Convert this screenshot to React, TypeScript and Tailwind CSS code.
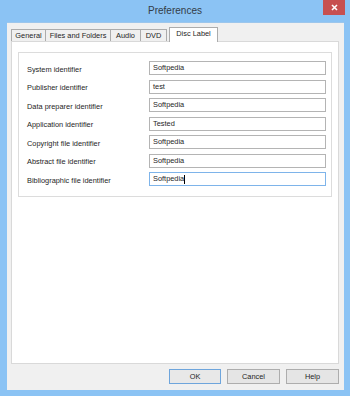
import React from 'react'

const fields = [
	{ label: 'System identifier', value: 'Softpedia' },
	{ label: 'Publisher identifier', value: 'test' },
	{ label: 'Data preparer identifier', value: 'Softpedia' },
	{ label: 'Application identifier', value: 'Tested' },
	{ label: 'Copyright file identifier', value: 'Softpedia' },
	{ label: 'Abstract file identifier', value: 'Softpedia' },
	{ label: 'Bibliographic file identifier', value: 'Softpedia', focused: true },
]

const tabs = [
	{ name: 'General', w: 'w-[35px]' },
	{ name: 'Files and Folders', w: 'w-[66px]' },
	{ name: 'Audio', w: 'w-[31px]' },
	{ name: 'DVD', w: 'w-[27px]' },
]

const App = () => {
	return (
		<div className="w-[350px] h-[396px] bg-[#8bc3f4] flex flex-col text-[#1e1e1e] font-['Liberation_Sans',Arial,sans-serif] overflow-hidden">
			{/* title bar */}
			<div className="relative h-[22px] shrink-0 flex items-center justify-center">
				<span className="text-[10px] text-[#333c47] leading-none">Preferences</span>
				<div className="absolute right-[5px] top-0 w-[22px] h-[15px] bg-[#c75050] flex items-center justify-center">
					<svg width="7" height="7" viewBox="0 0 7 7">
						<path d="M1 1L6 6M6 1L1 6" stroke="#fff" strokeWidth="1.6" />
					</svg>
				</div>
			</div>

			{/* client area */}
			<div className="flex-1 ml-[7px] mr-[6px] mb-[6px] bg-[#f0f0f0] border-t border-[#9cc6ec] flex flex-col pt-[4px] pl-[4px] pr-[5px] pb-[6px]">
				{/* tabs */}
				<div className="h-[14px] flex items-end shrink-0">
					{tabs.map((t, i) => (
						<div
							key={t.name}
							className={`${t.w} h-[12px] ${i > 0 ? '-ml-px' : ''} border border-b-0 border-[#acacac] bg-[#f0f0f0] flex items-center justify-center text-[7.4px] leading-none whitespace-nowrap`}
						>
							{t.name}
						</div>
					))}
					<div className="relative z-10 ml-[2px] w-[49px] h-[15px] -mb-px border border-b-0 border-[#acacac] bg-white flex items-center justify-center text-[7.4px] leading-none whitespace-nowrap pb-[2px]">
						Disc Label
					</div>
				</div>

				{/* panel */}
				<div className="flex-1 border border-[#d9d9d9] bg-white pt-[10px] px-[6px]">
					<div className="border border-[#dcdcdc] h-[145px] pl-[8px] pr-[5px] pt-[8px] flex flex-col gap-[4.5px]">
						{fields.map((f) => (
							<div key={f.label} className="flex items-center h-[14px]">
								<div className="w-[122px] text-[7.4px] leading-none pt-[3px] whitespace-nowrap">{f.label}</div>
								<div
									className={`flex-1 h-[14px] border ${f.focused ? 'border-[#7eb4ea]' : 'border-[#b4b4b4]'} bg-white flex items-center pl-[3px] text-[7.4px] leading-none`}
								>
									<span>{f.value}</span>
									{f.focused && <span className="w-px h-[9px] bg-black" />}
								</div>
							</div>
						))}
					</div>
				</div>

				{/* buttons */}
				<div className="mt-[5px] h-[15px] flex justify-end gap-[6px] shrink-0">
					<div className="w-[52px] h-[15px] border border-[#6ea5dc] bg-[#e8e8e8] flex items-center justify-center text-[7.4px] leading-none">OK</div>
					<div className="w-[53px] h-[15px] border border-[#adadad] bg-[#e5e5e5] flex items-center justify-center text-[7.4px] leading-none">Cancel</div>
					<div className="w-[53px] h-[15px] border border-[#adadad] bg-[#e5e5e5] flex items-center justify-center text-[7.4px] leading-none">Help</div>
				</div>
			</div>
		</div>
	)
}

export default App
